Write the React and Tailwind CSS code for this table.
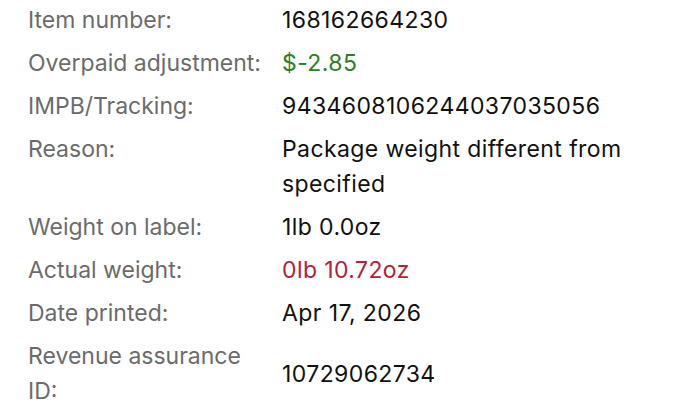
const rows = [
	{ label: "Item number:", value: "168162664230" },
	{ label: "Overpaid adjustment:", value: "$-2.85", tone: "text-[#2f7d24]" },
	{ label: "IMPB/Tracking:", value: "9434608106244037035056" },
	{ label: "Reason:", value: "Package weight different from specified" },
	{ label: "Weight on label:", value: "1lb 0.0oz" },
	{ label: "Actual weight:", value: "0lb 10.72oz", tone: "text-[#b1213a]" },
	{ label: "Date printed:", value: "Apr 17, 2026" },
	{ label: "Revenue assurance ID:", value: "10729062734", center: true },
];

export default function App() {
	return (
		<div className="w-[689px] h-[411px] overflow-hidden bg-white font-['Inter','Liberation_Sans',sans-serif] text-[23px] leading-[35px]">
			<div className="grid grid-cols-[254px_1fr] pl-[28px] pr-[40px] -mt-[1px]">
				{rows.map((r) => (
					<div key={r.label} className="contents">
						<div
							className={`py-[4px] text-[#6b6b6b] ${r.center ? "max-w-[222px]" : ""}`}
						>
							{r.label}
						</div>
						<div
							className={`py-[4px] tracking-[0.4px] ${r.tone || "text-[#111]"} ${r.center ? "self-center" : ""}`}
						>
							{r.value}
						</div>
					</div>
				))}
			</div>
		</div>
	);
}
